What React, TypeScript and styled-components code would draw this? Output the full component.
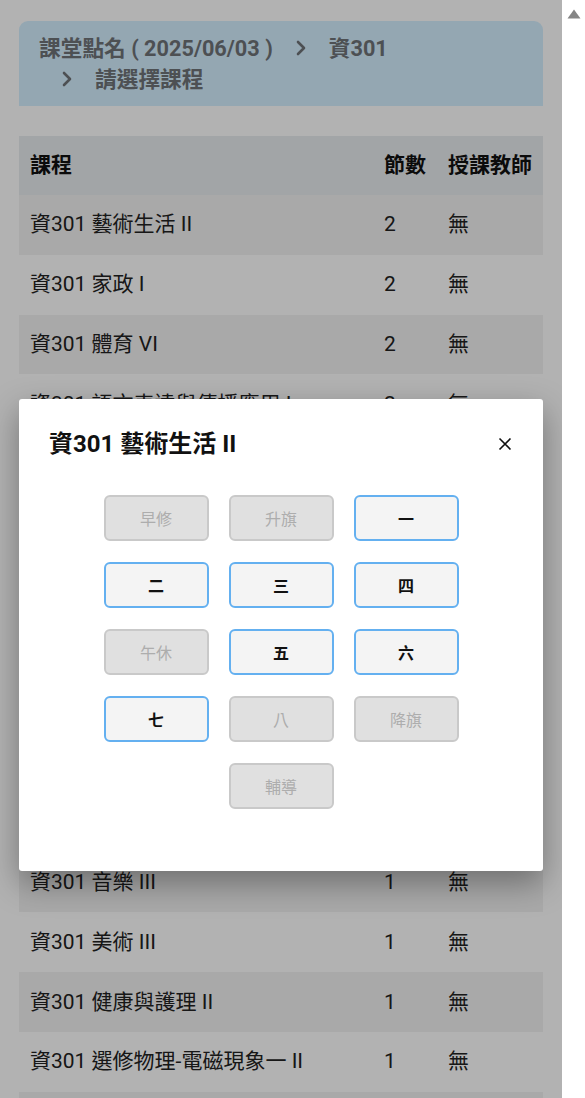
import { createGlobalStyle } from "styled-components";
import styled from "styled-components";

interface CourseRow {
  name: string;
  periods: number;
  teacher: string;
  striped: boolean;
}

interface SlotProps {
  label: string;
  enabled: boolean;
}

const courses: CourseRow[] = [
  { name: "資301 藝術生活 II", periods: 2, teacher: "無", striped: true },
  { name: "資301 家政 I", periods: 2, teacher: "無", striped: false },
  { name: "資301 體育 VI", periods: 2, teacher: "無", striped: true },
  { name: "資301 語文表達與傳播應用 I", periods: 2, teacher: "無", striped: false },
  { name: "資301 英語文 VI", periods: 4, teacher: "無", striped: true },
  { name: "資301 數學 VI", periods: 4, teacher: "無", striped: false },
  { name: "資301 國語文 VI", periods: 4, teacher: "無", striped: true },
  { name: "資301 歷史 II", periods: 2, teacher: "無", striped: false },
  { name: "資301 地理 II", periods: 2, teacher: "無", striped: true },
  { name: "資301 公民與社會 II", periods: 2, teacher: "無", striped: false },
  { name: "資301 全民國防教育 II", periods: 1, teacher: "無", striped: true },
  { name: "資301 音樂 III", periods: 1, teacher: "無", striped: true },
  { name: "資301 美術 III", periods: 1, teacher: "無", striped: false },
  { name: "資301 健康與護理 II", periods: 1, teacher: "無", striped: true },
  { name: "資301 選修物理-電磁現象一 II", periods: 1, teacher: "無", striped: false },
  { name: "資301 彈性學習 II", periods: 1, teacher: "無", striped: true },
  { name: "資301 團體活動 II", periods: 1, teacher: "無", striped: false },
];

const slots: SlotProps[] = [
  { label: "早修", enabled: false },
  { label: "升旗", enabled: false },
  { label: "一", enabled: true },
  { label: "二", enabled: true },
  { label: "三", enabled: true },
  { label: "四", enabled: true },
  { label: "午休", enabled: false },
  { label: "五", enabled: true },
  { label: "六", enabled: true },
  { label: "七", enabled: true },
  { label: "八", enabled: false },
  { label: "降旗", enabled: false },
  { label: "輔導", enabled: false },
];

const GlobalStyle = createGlobalStyle`
  body {
    margin: 0;
    background: #ffffff;
    font-family: Roboto, "Noto Sans CJK TC", sans-serif;
    color: #212529;
  }
`;

const Shell = styled.div`
  display: flex;
  height: 100vh;
  overflow: hidden;
`;

const Viewport = styled.div`
  position: relative;
  flex: 1;
  min-width: 0;
  overflow: hidden;
`;

const ScrollTrack = styled.div`
  width: 23px;
  flex-shrink: 0;
  background: #fff;
  display: flex;
  justify-content: center;
  padding-top: 9px;
  box-sizing: border-box;
`;

const Page = styled.div`
  padding: 21px 19px 40px;
`;

const Breadcrumb = styled.div`
  display: flex;
  flex-wrap: wrap;
  align-items: center;
  padding: 11.5px 20px;
  background: rgb(213, 239, 255);
  border-radius: 9px 9px 0 0;
  color: #6f7378;
  font-size: 21.7px;
  font-weight: 700;
  line-height: 31px;
`;

const Crumb = styled.span<{ $first?: boolean }>`
  display: flex;
  align-items: center;
  gap: 20px;
  margin-left: ${(p) => (p.$first ? "0" : "20px")};
  white-space: nowrap;
`;

const Table = styled.table`
  width: 100%;
  margin-top: 30px;
  border-collapse: collapse;
  font-size: 21px;
  line-height: 31px;
`;

const HeadCell = styled.th<{ $wide?: boolean }>`
  width: ${(p) => (p.$wide ? "100%" : "auto")};
  padding: 14px 11px;
  background: #e9ecef;
  text-align: left;
  font-weight: 700;
  color: #111;
  white-space: nowrap;
`;

const Row = styled.tr<{ $striped: boolean }>`
  background: ${(p) => (p.$striped ? "#f2f2f3" : "transparent")};
`;

const Cell = styled.td`
  padding: 14.4px 11px;
  color: #222;
  white-space: nowrap;
`;

const Overlay = styled.div`
  position: absolute;
  inset: 0;
  background: rgba(0, 0, 0, 0.3);
  padding: 399px 19px 0;
`;

const Dialog = styled.div`
  background: #fff;
  border-radius: 3px;
  box-shadow: 0 12px 32px rgba(0, 0, 0, 0.35);
  padding: 30px 30px 62px;
`;

const DialogHeader = styled.div`
  display: flex;
  align-items: center;
  justify-content: space-between;
`;

const DialogTitle = styled.h2`
  margin: 0;
  font-size: 24px;
  line-height: 30px;
  font-weight: 700;
  color: #111;
`;

const CloseButton = styled.button`
  display: flex;
  padding: 0;
  border: none;
  background: none;
  cursor: pointer;
  margin-right: 1px;
`;

const SlotGrid = styled.div`
  display: flex;
  flex-wrap: wrap;
  justify-content: center;
  gap: 21px 20px;
  width: 355px;
  margin: 36px auto 0;
`;

const SlotButton = styled.button<{ $enabled: boolean }>`
  box-sizing: border-box;
  width: 105px;
  height: 46px;
  border-radius: 6px;
  border: 2px solid ${(p) => (p.$enabled ? "#64b0f0" : "#c9c9c9")};
  background: ${(p) => (p.$enabled ? "#f4f4f4" : "#e0e0e0")};
  color: ${(p) => (p.$enabled ? "#111" : "#adadad")};
  font-family: Roboto, "Noto Sans CJK TC", sans-serif;
  font-size: 16px;
  font-weight: ${(p) => (p.$enabled ? 700 : 400)};
  cursor: ${(p) => (p.$enabled ? "pointer" : "default")};
`;

const Chevron = () => (
  <svg width="16" height="16" viewBox="0 0 16 16">
    <polyline
      points="5 2 11 8 5 14"
      fill="none"
      stroke="currentColor"
      strokeWidth="2.6"
      strokeLinecap="round"
      strokeLinejoin="round"
    />
  </svg>
);

const CloseIcon = () => (
  <svg width="14" height="14" viewBox="0 0 14 14">
    <path d="M1.5 1.5 L12.5 12.5 M12.5 1.5 L1.5 12.5" stroke="#111" strokeWidth="1.6" />
  </svg>
);

const ScrollArrow = () => (
  <svg width="14" height="10" viewBox="0 0 14 10">
    <path d="M7 0.5 L13.5 9.5 L0.5 9.5 Z" fill="#858585" />
  </svg>
);

export default function App() {
  return (
    <>
      <GlobalStyle />
      <Shell>
        <Viewport>
          <Page>
            <Breadcrumb>
              <Crumb $first>課堂點名 ( 2025/06/03 )</Crumb>
              <Crumb>
                <Chevron />
                資301
              </Crumb>
              <Crumb>
                <Chevron />
                請選擇課程
              </Crumb>
            </Breadcrumb>
            <Table>
              <thead>
                <tr>
                  <HeadCell $wide>課程</HeadCell>
                  <HeadCell>節數</HeadCell>
                  <HeadCell>授課教師</HeadCell>
                </tr>
              </thead>
              <tbody>
                {courses.map((c) => (
                  <Row key={c.name} $striped={c.striped}>
                    <Cell>{c.name}</Cell>
                    <Cell>{c.periods}</Cell>
                    <Cell>{c.teacher}</Cell>
                  </Row>
                ))}
              </tbody>
            </Table>
          </Page>
          <Overlay>
            <Dialog>
              <DialogHeader>
                <DialogTitle>資301 藝術生活 II</DialogTitle>
                <CloseButton aria-label="close">
                  <CloseIcon />
                </CloseButton>
              </DialogHeader>
              <SlotGrid>
                {slots.map((s) => (
                  <SlotButton key={s.label} $enabled={s.enabled} disabled={!s.enabled}>
                    {s.label}
                  </SlotButton>
                ))}
              </SlotGrid>
            </Dialog>
          </Overlay>
        </Viewport>
        <ScrollTrack>
          <ScrollArrow />
        </ScrollTrack>
      </Shell>
    </>
  );
}
